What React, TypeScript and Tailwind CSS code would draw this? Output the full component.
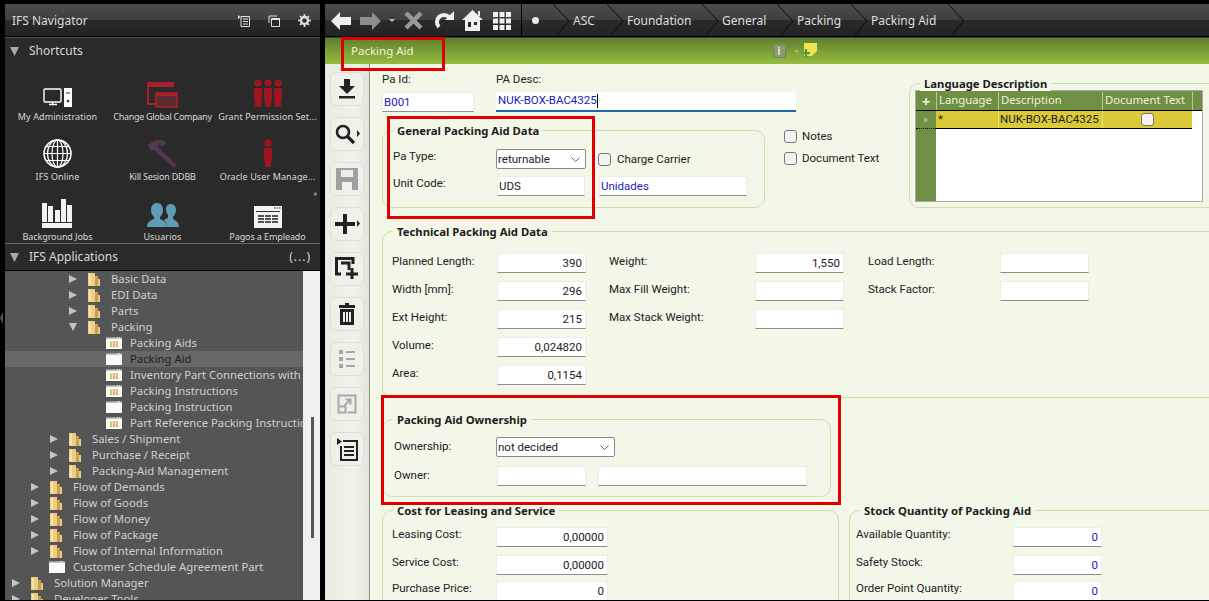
import React from 'react';

const barBg =
  'bg-[linear-gradient(to_bottom,#4c4c4c_0%,#3f3f3f_50%,#2b2b2b_50%,#232323_100%)]';

const Field = ({ value, className = '', blue = false, right = false }: { value?: string; className?: string; blue?: boolean; right?: boolean }) => (
  <input
    readOnly
    value={value ?? ''}
    className={`h-[20px] shrink-0 bg-white border border-[#eceee6] border-b-[#8d8d8d] px-[1px] pb-[1px] text-[11.5px] outline-none ${right ? 'text-right pr-[3px]' : ''} ${blue ? 'text-[#2222b8]' : 'text-[#222]'} ${className}`}
  />
);

const Dropdown = ({ value, className = '' }: { value: string; className?: string }) => (
  <div className={`h-[20px] shrink-0 flex items-center justify-between bg-white border border-[#8a8a8a] rounded-[2px] pl-[1px] pr-[5px] text-[11.5px] text-[#222] ${className}`}>
    <span className="pt-[1px]">{value}</span>
    <svg width="9" height="5" viewBox="0 0 9 5"><path d="M.5.5 4.500 4.500 8.500.5" fill="none" stroke="#666" /></svg>
  </div>
);

const Check = ({ className = '' }: { className?: string }) => (
  <span className={`block w-[13px] h-[13px] shrink-0 rounded-[3px] border border-[#777] bg-[#f3f3f3] ${className}`} />
);

const Group = ({ title, className = '', children }: { title: string; className?: string; children?: React.ReactNode }) => (
  <div className={`relative shrink-0 border border-[#cfdfa8] rounded-[10px] ${className}`}>
    <h3 className="absolute -top-[8px] left-[10px] bg-[#f2f7e8] px-[4px] text-[11.3px] leading-[15px] font-bold font-['Noto_Sans',sans-serif] text-[#1c1c1c] whitespace-nowrap">{title}</h3>
    {children}
  </div>
);

const Row = ({ label, labelW, lift = '-mt-[3px]', children }: { label: string; labelW: string; lift?: string; children: React.ReactNode }) => (
  <div className="flex items-center h-[20px]">
    <span className={`${labelW} ${lift} shrink-0 whitespace-nowrap`}>{label}</span>
    {children}
  </div>
);

/* ---- sidebar icons ---- */
const Folder = () => (
  <svg width="14" height="15" viewBox="0 0 14 15" className="shrink-0">
    <path d="M1 1h7v13H1z" fill="#edcd84" />
    <path d="M8 4h3v10H8z" fill="#c9a050" />
    <path d="M11 7h2v7h-2z" fill="#ecca80" />
    <path d="M2 2h2v11H2z" fill="#f8e2aa" />
  </svg>
);

const WinIcon = ({ table = false }: { table?: boolean }) => (
  <svg width="16" height="12" viewBox="0 0 16 12" className="shrink-0">
    <rect width="16" height="12" fill="#fafafa" />
    <rect width="16" height="1.600" fill="#9a9a9a" />
    <path d="M11 .8h1M13 .8h1" stroke="#fff" strokeWidth="1" />
    {table && <path d="M4 4.500h8v5.500H4z" fill="#c9a94c" />}
    {table && <path d="M4 6.200h8M4 8.200h8M6.500 4.500V10M9.500 4.500V10" stroke="#f7f3e0" strokeWidth=".7" />}
  </svg>
);

const Shortcut = ({ label, tracking, children }: { label: string; tracking: string; children: React.ReactNode }) => (
  <div className="flex flex-col items-center h-[60px]">
    <div className="h-[36px] flex items-end justify-center">{children}</div>
    <span className={`mt-[2px] text-[9px] ${tracking} leading-[14px] text-[#d8d8d8] whitespace-nowrap`}>{label}</span>
  </div>
);

const Person = ({ x = 0 }: { x?: number }) => (
  <g transform={`translate(${x} 0)`}>
    <circle cx="5" cy="4" r="3.600" />
    <path d="M1 9h8v9l-1.400 10H2.400L1 18z" />
  </g>
);

const shortcuts = [
  {
    label: 'My Administration',
    tracking: 'tracking-[.1px]',
    icon: (
      <svg width="30" height="20" viewBox="0 0 30 20" fill="none">
        <rect x="1" y="1" width="17" height="13" rx="1" stroke="#fff" strokeWidth="1.400" />
        <path d="M6 16.500h8M9.500 14v2.500" stroke="#fff" strokeWidth="1.400" />
        <path d="M21 0h8v19h-8z" fill="#fff" />
        <path d="M23 5h4" stroke="#333" />
        <circle cx="25" cy="13" r="1.300" fill="#333" />
      </svg>
    ),
  },
  {
    label: 'Change Global Company',
    tracking: 'tracking-[-.3px]',
    icon: (
      <svg width="31" height="27" viewBox="0 0 31 27">
        <path d="M0 1h27v5H0zM0 6h2v16h6v2H0z" fill="#a8202b" />
        <rect x="9" y="12" width="21" height="14" fill="#5a2a2e" stroke="#a8202b" strokeWidth="1.600" />
        <path d="M9 12h21v3H9z" fill="#a8202b" />
      </svg>
    ),
  },
  {
    label: 'Grant Permission Set...',
    tracking: 'tracking-[.1px]',
    icon: (
      <svg width="30" height="29" viewBox="0 0 30 29" fill="#a0141f">
        <Person x={0} />
        <Person x={10} />
        <Person x={20} />
      </svg>
    ),
  },
  {
    label: 'IFS Online',
    tracking: 'tracking-[.1px]',
    icon: (
      <svg width="29" height="29" viewBox="0 0 29 29" fill="none" stroke="#fff" strokeWidth="1.200">
        <circle cx="14.500" cy="14.500" r="13.500" strokeWidth="1.600" />
        <ellipse cx="14.500" cy="14.500" rx="5.500" ry="13.500" />
        <ellipse cx="14.500" cy="14.500" rx="10" ry="13.500" />
        <path d="M14.500 1v27M1 14.500h27M3 7.500h23M3 21.500h23" />
      </svg>
    ),
  },
  {
    label: 'Kill Sesion DDBB',
    tracking: 'tracking-[-.2px]',
    icon: (
      <svg width="31" height="29" viewBox="0 0 31 29" fill="#533650">
        <path d="M1 6 8 1h8l3 3-3 3-4-1-2 1 20 19-3 3L7 11 4 12z" />
      </svg>
    ),
  },
  {
    label: 'Oracle User Manage...',
    tracking: 'tracking-[.1px]',
    icon: (
      <svg width="10" height="29" viewBox="0 0 10 29" fill="#a0141f">
        <Person />
      </svg>
    ),
  },
  {
    label: 'Background Jobs',
    tracking: 'tracking-[-.1px]',
    icon: (
      <svg width="31" height="30" viewBox="0 0 31 30" fill="#f2f2f2">
        <path d="M0 5h5v19H0zM6 8h5v16H6zM13 12h5v12h-5zM19 1h5v23h-5zM25 7h5v17h-5zM0 25h30v5H0z" />
      </svg>
    ),
  },
  {
    label: 'Usuarios',
    tracking: 'tracking-[.1px]',
    icon: (
      <svg width="32" height="26" viewBox="0 0 32 26" fill="#5d9db5">
        <path d="M24 2c3 0 5 2.500 5 6s-2 6-3 7v2c2 1 6 3 6 8H20c0-3-1-5-3-7 2-1 4-2 4-3v-2c-1-1-2-3-2-6s2-5 5-5z" />
        <path d="M10 1c4 0 6 3 6 7s-2 6-3 7v2c3 1 7 3 7 8H0c0-5 4-7 7-8v-2c-1-1-3-3-3-7s2-7 6-7z" />
      </svg>
    ),
  },
  {
    label: 'Pagos a Empleado',
    tracking: 'tracking-[-.1px]',
    icon: (
      <svg width="28" height="22" viewBox="0 0 28 22">
        <rect width="28" height="22" fill="#f4f4f4" />
        <path d="M20 2h1.500M22.500 2H24M25 2h1.500" stroke="#222" />
        <rect x="2" y="5" width="24" height="1" fill="#333" />
        <path d="M4 9h6v8H4zM11 9h6v8h-6zM18 9h6v8h-6z" fill="#555" />
        <path d="M4 11.500h20M4 14.500h20" stroke="#f4f4f4" />
      </svg>
    ),
  },
];

type Node = { t: string; d: number; k: 'closed' | 'open' | 'win' | 'table'; sel?: boolean };
const tree: Node[] = [
  { t: 'Basic Data', d: 3, k: 'closed' },
  { t: 'EDI Data', d: 3, k: 'closed' },
  { t: 'Parts', d: 3, k: 'closed' },
  { t: 'Packing', d: 3, k: 'open' },
  { t: 'Packing Aids', d: 4, k: 'table' },
  { t: 'Packing Aid', d: 4, k: 'win', sel: true },
  { t: 'Inventory Part Connections with Packing Aid', d: 4, k: 'table' },
  { t: 'Packing Instructions', d: 4, k: 'table' },
  { t: 'Packing Instruction', d: 4, k: 'win' },
  { t: 'Part Reference Packing Instructions', d: 4, k: 'table' },
  { t: 'Sales / Shipment', d: 2, k: 'closed' },
  { t: 'Purchase / Receipt', d: 2, k: 'closed' },
  { t: 'Packing-Aid Management', d: 2, k: 'closed' },
  { t: 'Flow of Demands', d: 1, k: 'closed' },
  { t: 'Flow of Goods', d: 1, k: 'closed' },
  { t: 'Flow of Money', d: 1, k: 'closed' },
  { t: 'Flow of Package', d: 1, k: 'closed' },
  { t: 'Flow of Internal Information', d: 1, k: 'closed' },
  { t: 'Customer Schedule Agreement Part', d: 1, k: 'win' },
  { t: 'Solution Manager', d: 0, k: 'closed' },
  { t: 'Developer Tools', d: 0, k: 'closed' },
];
const indent = ['pl-[7px]', 'pl-[26px]', 'pl-[45px]', 'pl-[64px]', 'pl-[83px]'];

const TreeRow = ({ n }: { n: Node }) => {
  const isFolder = n.k === 'closed' || n.k === 'open';
  return (
    <div className={`flex items-center h-[16px] whitespace-nowrap ${indent[n.d]} ${n.sel ? 'bg-[#686868] text-[#1e1e1e]' : 'text-[#cfcfcf]'}`}>
      <span className="w-[18px] shrink-0 flex">
        {n.k === 'closed' && <svg width="8" height="8" viewBox="0 0 8 8"><path d="M0 0l8 4-8 4z" fill="#c4c4c4" /></svg>}
        {n.k === 'open' && <svg width="8" height="8" viewBox="0 0 8 8"><path d="M0 0h8L4 8z" fill="#c4c4c4" /></svg>}
      </span>
      <span className="w-[24px] shrink-0 flex">
        {isFolder ? <Folder /> : <WinIcon table={n.k === 'table'} />}
      </span>
      <span>{n.t}</span>
    </div>
  );
};

const SectionHead = ({ title, children }: { title: string; children?: React.ReactNode }) => (
  <div className="flex items-center h-[26px] pl-[5px] pr-[9px] text-[12px] text-[#d8d8d8] bg-[#2a2a2a]">
    <svg width="9" height="9" viewBox="0 0 9 9" className="mr-[10px] shrink-0"><path d="M0 0h9L4.500 9z" fill="#a9a9a9" /></svg>
    <span className="flex-1">{title}</span>
    {children}
  </div>
);

const Sidebar = () => (
  <aside className="w-[315px] shrink-0 flex flex-col h-full ml-[5px] overflow-hidden">
    <div className={`flex items-center h-[33px] shrink-0 pl-[7px] pr-[9px] pt-[1px] text-[12px] text-[#dcdcdc] border-b border-black ${barBg}`}>
      <span className="flex-1">IFS Navigator</span>
      <div className="flex items-center gap-[18px]">
        <svg width="12" height="12" viewBox="0 0 12 12" fill="none" stroke="#e4e4e4"><path d="M3 1.500h8.500v10H3zM5 4h5M5 6.500h5M5 9h5" /><path d="M0 0l2.500 2L0 4z" fill="#e4e4e4" stroke="none" /></svg>
        <svg width="12" height="12" viewBox="0 0 12 12" fill="none" stroke="#e4e4e4"><path d="M1 8V1h8" /><path d="M3.500 3.500h8v8h-8z" /><path d="M3.500 4.500h8" /></svg>
        <svg width="13" height="13" viewBox="0 0 13 13"><circle cx="6.500" cy="6.500" r="3.500" fill="none" stroke="#ddd" strokeWidth="2.400" /><path d="M6.500 0v13M0 6.500h13M2 2l9 9M11 2l-9 9" stroke="#ddd" strokeWidth="1.700" strokeDasharray="2.500 8 2.500" /></svg>
      </div>
    </div>
    <div className="h-px bg-[#555] shrink-0" />
    <SectionHead title="Shortcuts" />
    <div className="relative h-[179px] shrink-0 bg-[#2a2a2a] pt-[8px] grid grid-cols-[105px_105px_105px] content-start">
      {shortcuts.map((s) => (
        <Shortcut key={s.label} label={s.label} tracking={s.tracking}>{s.icon}</Shortcut>
      ))}
      <span className="absolute right-[3px] top-[126px] text-[7px] leading-[8px] text-[#ddd]">»</span>
    </div>
    <div className="h-px bg-[#666] shrink-0" />
    <SectionHead title="IFS Applications">
      <span className="tracking-[1px]">(...)</span>
    </SectionHead>
    <div className="h-px bg-black shrink-0" />
    <div className="flex flex-1 min-h-0 bg-[#555] text-[11.3px] mb-[1px]">
      <div className="w-[298px] overflow-hidden">
        {tree.map((n) => <TreeRow key={n.t} n={n} />)}
      </div>
      <div className="flex-1 bg-[#efefef] pl-[8px] pt-[146px]">
        <div className="w-[3px] h-[121px] bg-[#555]" />
      </div>
    </div>
  </aside>
);

/* ---- top bar ---- */
const crumbs = [
  { t: 'ASC', w: 'w-[38px]' },
  { t: 'Foundation', w: 'w-[79px]' },
  { t: 'General', w: 'w-[59px]' },
  { t: 'Packing', w: 'w-[58px]' },
  { t: 'Packing Aid', w: 'w-[81px]' },
];

const Chevron = () => (
  <svg width="16" height="33" viewBox="0 0 16 33" className="shrink-0"><path d="M0 0l16 17L2 33" fill="none" stroke="#0c0c0c" strokeWidth="1" /></svg>
);

const TopBar = () => (
  <div className={`flex items-center h-[33px] shrink-0 pl-[6px] text-[12px] text-[#dedede] border-b border-black ${barBg}`}>
    <svg width="20" height="18" viewBox="0 0 20 18" className="shrink-0 mt-[1px]"><path d="M0 9 9 0v5h11v8H9v5z" fill="#eee" /></svg>
    <svg width="21" height="18" viewBox="0 0 21 18" className="ml-[9px] shrink-0 mt-[1px]"><path d="M21 9l-9-9v5H0v8h12v5z" fill="#8d8d8d" /></svg>
    <svg width="6" height="3" viewBox="0 0 6 3" className="ml-[8px] shrink-0"><path d="M0 0h6L3 3z" fill="#bbb" /></svg>
    <svg width="19" height="19" viewBox="0 0 19 19" className="ml-[9px] shrink-0 mt-[1px]"><path d="M2 2l15 15M17 2 2 17" stroke="#999" strokeWidth="4.500" /></svg>
    <svg width="20" height="20" viewBox="0 0 20 20" className="ml-[11px] shrink-0 mt-[1px]"><path d="M15 6A7 7 0 1 0 5 16" fill="none" stroke="#eee" strokeWidth="4" /><path d="M11 9l9-9v9z" fill="#eee" /></svg>
    <svg width="21" height="21" viewBox="0 0 21 21" className="ml-[8px] shrink-0"><path fillRule="evenodd" d="M10.500 0 21 10h-3v11H3V10H0zM6 12v5h3v-5zm6 0v3h3v-3z" fill="#f0f0f0" /><path d="M16 1h2v5h-2z" fill="#f0f0f0" /></svg>
    <svg width="18" height="18" viewBox="0 0 18 18" className="ml-[10px] shrink-0 mt-[1px]" fill="#f0f0f0">
      <path d="M0 0h5v5H0zM6.500 0h5v5h-5zM13 0h5v5h-5zM0 6.500h5v5H0zM6.500 6.500h5v5h-5zM13 6.500h5v5h-5zM0 13h5v5H0zM6.500 13h5v5h-5zM13 13h5v5h-5z" />
    </svg>
    <div className="w-px h-full bg-black ml-[10px] shrink-0" />
    <span className="w-[7px] h-[7px] rounded-full bg-[#e8e8e8] ml-[10px] mr-[14px] shrink-0" />
    {crumbs.map((c) => (
      <React.Fragment key={c.t}>
        <Chevron />
        <span className={`${c.w} shrink-0 pl-[4px] pt-[1px] whitespace-nowrap`}>{c.t}</span>
      </React.Fragment>
    ))}
    <Chevron />
  </div>
);

const GreenBar = () => (
  <div className="relative flex items-center h-[26px] shrink-0 pl-[26px] text-[11.5px] text-[#eef5d8] bg-[linear-gradient(to_bottom,#5f7f2f,#97bd3e)]">
    <span>Packing Aid</span>
    <div className="flex items-center ml-[359px]">
      <span className="w-[13px] h-[14px] bg-[#8b9a6c] border border-[#75845a] flex items-center justify-center text-[10px] font-bold leading-none text-[#e8eedb]">i</span>
      <svg width="5" height="3" viewBox="0 0 5 3" className="ml-[8px]"><path d="M0 0h5L2.500 3z" fill="#a6bd70" /></svg>
      <svg width="14" height="15" viewBox="0 0 14 15" className="ml-[4px] -mt-[1px]">
        <path d="M1 0h13v8l-5 5H1z" fill="#f0e35a" />
        <path d="M3 6v8M0 10h7" stroke="#3f9c3c" strokeWidth="2.200" />
      </svg>
    </div>
  </div>
);

/* ---- left tool strip ---- */
const tools = [
  <path key="a" transform="translate(3 1)" d="M6 1h6v7h5l-8 8-8-8h5zM1 18h16v2.500H1z" fill="#222" />,
  <g key="b" transform="translate(2 2)" fill="none" stroke="#222"><circle cx="8" cy="8" r="6" strokeWidth="2.600" /><path d="M12.500 12.500 19 19" strokeWidth="3.200" /></g>,
  <path key="c" transform="translate(1 1)" fillRule="evenodd" d="M0 0h22v22H0zM5 2v7h12V2zM6 14v8h10v-8z" fill="#a0a0a0" />,
  <path key="d" transform="translate(2 2)" d="M8 0h4v8h8v4h-8v8H8v-8H0V8h8z" fill="#222" />,
  <g key="e" fill="none" stroke="#222" strokeWidth="3"><path d="M6 17H1.500V1.500H18V7" /><path d="M6 6h8v7" /><path d="M17 11v11M11 17h12" strokeWidth="3" /></g>,
  <path key="f" transform="translate(4 1)" fillRule="evenodd" d="M6 0h4v2h6v3H0V2h6zM1 6h14v16H1zm3 3v10h2V9zm3 0v10h2V9zm3 0v10h2V9z" fill="#222" />,
  <path key="g" transform="translate(4 2)" d="M0 1h4v4H0zM7 2h9v2H7zM0 8h4v4H0zM7 9h9v2H7zM0 15h4v4H0zM7 16h9v2H7z" fill="#a8a8a8" />,
  <g key="h" transform="translate(2.500 2.500)" fill="none" stroke="#a8a8a8" strokeWidth="2"><path d="M1 11V1h17v17H10" /><path d="M1 12h7v6H1z" /><path d="M7 11l6-6M8 5h5v5" /></g>,
  <g key="i" transform="translate(2 1)"><path d="M0 0l5 3.500L0 7z" fill="#222" /><path d="M6 3h14v19H4V8" fill="none" stroke="#222" strokeWidth="2" /><path d="M7 9h10M7 13h10M7 17h10" stroke="#222" strokeWidth="2" /></g>,
];

const ToolStrip = () => (
  <div className="w-[45px] shrink-0 flex flex-col items-center gap-[11px] pt-[8px] bg-[linear-gradient(to_right,#e9ece1,#eff2e7_70%,#e2e4da)] border-r border-[#8d8f88]">
    {tools.map((icon, i) => (
      <div key={i} className="relative w-[34px] h-[34px] flex items-center justify-center rounded-[6px] border-[1.5px] border-[#dcdfd5] bg-[#eef1e7]">
        <svg width="24" height="24" viewBox="0 0 24 24" className={i === 1 || i === 3 ? '-translate-x-[2px]' : ''}>{icon}</svg>
        {(i === 1 || i === 3) && (
          <svg width="3" height="7" viewBox="0 0 3 7" className="absolute right-[3px] top-[12px]"><path d="M0 0l3 3.500L0 7z" fill="#222" /></svg>
        )}
      </div>
    ))}
  </div>
);

/* ---- language table ---- */
const LanguageTable = () => (
  <Group title="Language Description" className="w-[320px] h-[125px] mt-[19px] pl-[5px] pt-[6px]">
    <div className="flex flex-col w-[288px] h-[112px] border border-[#a9a9a9] bg-white text-[11.5px]">
      <div className="grid grid-cols-[20px_62px_104px_90px_1fr] h-[20px] pt-[1px] bg-[#6f8f45] text-[#eef3df] border-b border-black shrink-0 font-['Noto_Sans',sans-serif] text-[11.3px]">
        <span className="flex items-center justify-center font-bold text-[15px] leading-none">+</span>
        <span className="border-l border-[#b9cb90] pl-[2px]">Language</span>
        <span className="border-l border-[#b9cb90] pl-[2px]">Description</span>
        <span className="border-l border-[#b9cb90] pl-[2px]">Document Text</span>
        <span className="border-l border-[#b9cb90]" />
      </div>
      <div className="flex flex-1 min-h-0">
        <div className="w-[20px] shrink-0 bg-[#6f8f45]">
          <div className="h-[18px] flex items-center justify-center border-b border-dotted border-black">
            <svg width="5" height="6" viewBox="0 0 5 6"><path d="M0 0l5 3-5 3z" fill="#9fb673" /></svg>
          </div>
        </div>
        <div className="h-[18px] flex-1 flex">
          <div className="grid grid-cols-[62px_104px_90px] h-[18px] bg-[#dcc938] border-b border-black text-[#222] items-center">
            <span className="pl-[2px] leading-none">*</span>
            <span className="border-l border-[#eadf80] pl-[1px] h-full leading-[17px] whitespace-nowrap">NUK-BOX-BAC4325</span>
            <span className="border-l border-[#eadf80] h-full flex items-center justify-center"><Check className="rounded-[2px]" /></span>
          </div>
        </div>
      </div>
    </div>
  </Group>
);

const Content = () => (
  <div className="flex-1 min-w-0 bg-[#f2f7e8] text-[11.5px] text-[#222] overflow-hidden">
    {/* top part */}
    <div className="flex h-[144px] pl-[12px]">
      <div className="w-[527px] shrink-0">
        <div className="flex pt-[8px] h-[48px]">
          <div className="w-[114px] shrink-0">
            <div className="leading-[15px] mb-[5px] whitespace-nowrap">Pa Id:</div>
            <Field value="B001" blue className="w-[92px]" />
          </div>
          <div>
            <div className="leading-[15px] mb-[5px] whitespace-nowrap">PA Desc:</div>
            <div className="flex items-center w-[300px] h-[20px] bg-white border-b-2 border-[#1f66b0] px-[2px] text-[#2222b8] whitespace-nowrap">
              NUK-BOX-BAC4325
              <span className="w-px h-[14px] bg-black" />
            </div>
          </div>
        </div>
        <div className="flex mt-[18px]">
          <Group title="General Packing Aid Data" className="w-[383px] h-[78px] pl-[10px] pt-[18px]">
            <Row label="Pa Type:" labelW="w-[103px]" lift="-mt-[4px]">
              <Dropdown value="returnable" className="w-[90px]" />
              <Check className="ml-[12px]" />
              <span className="ml-[6px] pt-[1px]">Charge Carrier</span>
            </Row>
            <div className="h-[7px]" />
            <Row label="Unit Code:" labelW="w-[104px]" lift="-mt-[4px]">
              <Field value="UDS" className="w-[88px]" />
              <Field value="Unidades" blue className="w-[148px] ml-[14px]" />
            </Row>
          </Group>
          <div className="ml-[19px] flex flex-col gap-[9px]">
            <label className="flex items-center h-[13px] gap-[5px] whitespace-nowrap"><Check /><span className="pt-[1px]">Notes</span></label>
            <label className="flex items-center h-[13px] gap-[5px] whitespace-nowrap"><Check /><span className="pt-[1px]">Document Text</span></label>
          </div>
        </div>
      </div>
      <LanguageTable />
    </div>

    {/* technical data */}
    <div className="pl-[12px] pt-[23px]">
      <Group title="Technical Packing Aid Data" className="w-[860px] h-[167px] pl-[9px] pt-[21px] flex">
        <div className="flex flex-col gap-[8px]">
          <Row label="Planned Length:" labelW="w-[105px]"><Field value="390" right className="w-[89px]" /></Row>
          <Row label="Width [mm]:" labelW="w-[105px]"><Field value="296" right className="w-[89px]" /></Row>
          <Row label="Ext Height:" labelW="w-[105px]"><Field value="215" right className="w-[89px]" /></Row>
          <Row label="Volume:" labelW="w-[105px]"><Field value="0,024820" right className="w-[89px]" /></Row>
          <Row label="Area:" labelW="w-[105px]"><Field value="0,1154" right className="w-[89px]" /></Row>
        </div>
        <div className="flex flex-col gap-[8px] ml-[23px]">
          <Row label="Weight:" labelW="w-[146px]"><Field value="1,550" right className="w-[89px]" /></Row>
          <Row label="Max Fill Weight:" labelW="w-[146px]"><Field className="w-[89px]" /></Row>
          <Row label="Max Stack Weight:" labelW="w-[146px]"><Field className="w-[89px]" /></Row>
        </div>
        <div className="flex flex-col gap-[8px] ml-[24px]">
          <Row label="Load Length:" labelW="w-[132px]"><Field className="w-[89px]" /></Row>
          <Row label="Stack Factor:" labelW="w-[132px]"><Field className="w-[89px]" /></Row>
        </div>
      </Group>
    </div>

    {/* ownership */}
    <div className="pl-[12px] pt-[21px]">
      <Group title="Packing Aid Ownership" className="w-[449px] h-[78px] pl-[11px] pt-[17px]">
        <Row label="Ownership:" labelW="w-[102px]" lift="-mt-[1px]"><Dropdown value="not decided" className="w-[119px]" /></Row>
        <div className="h-[9px]" />
        <Row label="Owner:" labelW="w-[103px]" lift="mt-0">
          <Field className="w-[89px]" />
          <Field className="w-[209px] ml-[12px]" />
        </Row>
      </Group>
    </div>

    {/* cost + stock */}
    <div className="flex pl-[12px] pt-[13px]">
      <Group title="Cost for Leasing and Service" className="w-[457px] h-[120px] pl-[9px] pt-[16px]">
        <Row label="Leasing Cost:" labelW="w-[104px]" lift="-mt-[4px]"><Field value="0,00000" right className="w-[112px]" /></Row>
        <div className="h-[8px]" />
        <Row label="Service Cost:" labelW="w-[104px]" lift="-mt-[4px]"><Field value="0,00000" right className="w-[112px]" /></Row>
        <div className="h-[6px]" />
        <Row label="Purchase Price:" labelW="w-[104px]" lift="-mt-[4px]"><Field value="0" right className="w-[112px]" /></Row>
      </Group>
      <Group title="Stock Quantity of Packing Aid" className="w-[380px] h-[120px] ml-[10px] pl-[6px] pt-[16px]">
        <Row label="Available Quantity:" labelW="w-[157px]" lift="-mt-[4px]"><Field value="0" right blue className="w-[89px]" /></Row>
        <div className="h-[8px]" />
        <Row label="Safety Stock:" labelW="w-[157px]" lift="-mt-[4px]"><Field value="0" right blue className="w-[89px]" /></Row>
        <div className="h-[6px]" />
        <Row label="Order Point Quantity:" labelW="w-[157px]" lift="-mt-[4px]"><Field value="0" right blue className="w-[89px]" /></Row>
      </Group>
    </div>
  </div>
);

export default function App() {
  return (
    <div className="relative w-[1209px] h-[601px] bg-black overflow-hidden font-['Roboto','Noto_Sans',sans-serif]">
      <div className="flex h-full pt-[4px]">
        <div className="font-['Noto_Sans',sans-serif] h-full flex">
          <Sidebar />
        </div>
        <main className="ml-[5px] flex-1 min-w-0 flex flex-col h-[596px] overflow-hidden">
          <div className="font-['Noto_Sans',sans-serif] flex flex-col shrink-0">
            <TopBar />
            <div className="h-px bg-[#3c3c3c] shrink-0" />
            <GreenBar />
          </div>
          <div className="flex flex-1 min-h-0">
            <ToolStrip />
            <Content />
          </div>
        </main>
      </div>

      {/* splitter grip on the window's left edge */}
      <div className="absolute left-0 top-[312px] w-0 h-0 border-y-[6px] border-y-transparent border-r-[3px] border-r-[#555]" />

      {/* red annotation boxes drawn over the screenshot */}
      <div className="absolute left-[341px] top-[37px] w-[104px] h-[34px] border-[3px] border-[#e00000]" />
      <div className="absolute left-[387px] top-[116px] w-[208px] h-[103px] border-[3px] border-[#e00000]" />
      <div className="absolute left-[381px] top-[395px] w-[460px] h-[110px] border-[3px] border-[#e00000]" />
    </div>
  );
}
